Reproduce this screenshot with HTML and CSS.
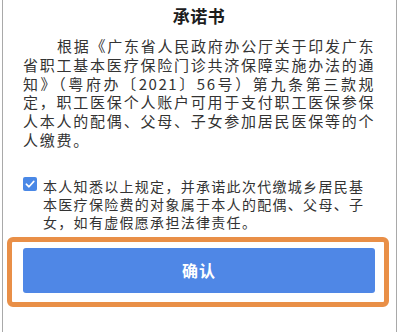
FILE: index.html
```html
<!DOCTYPE html>
<html lang="zh-CN">
<head>
<meta charset="utf-8">
<title>承诺书</title>
<link rel="stylesheet" href="styles.css">
</head>
<body>
<div class="sheet">
  <h1 class="title">承诺书</h1>
  <div class="body">
    <span class="ln first">根据《广东省人民政府办公厅关于印发广东</span>
    <span class="ln">省职工基本医疗保险门诊共济保障实施办法的通</span>
    <span class="ln">知》（粤府办〔2021〕56号）第九条第三款规</span>
    <span class="ln">定，职工医保个人账户可用于支付职工医保参保</span>
    <span class="ln">人本人的配偶、父母、子女参加居民医保等的个</span>
    <span class="ln last">人缴费。</span>
  </div>
  <div class="agree">
    <span class="check">
      <svg viewBox="0 0 14 14" width="14" height="14"><path d="M3.3 7.2 L6 9.8 L10.8 4.4" fill="none" stroke="#fff" stroke-width="1.6" stroke-linecap="round" stroke-linejoin="round"/></svg>
    </span>
    <div class="agree-text">
      <span class="aln">本人知悉以上规定，并承诺此次代缴城乡居民基</span>
      <span class="aln">本医疗保险费的对象属于本人的配偶、父母、子</span>
      <span class="aln">女，如有虚假愿承担法律责任。</span>
    </div>
  </div>
  <div class="highlight">
    <button class="confirm">确认</button>
  </div>
</div>
</body>
</html>
```

FILE: styles.css
```css
html, body {
  margin: 0;
  padding: 0;
  background: #fff;
}
body {
  width: 400px;
  height: 332px;
  overflow: hidden;
  font-family: "Noto Sans CJK SC", "Noto Sans", sans-serif;
}
.sheet {
  margin-left: 2px;
  width: 352px;
  min-height: 332px;
  padding: 6px 21px 0 20px;
  box-sizing: content-box;
  border-left: 1px solid #a9a9a9;
  border-right: 1px solid #a9a9a9;
  display: flex;
  flex-direction: column;
}
.title {
  margin: 0;
  font-size: 17px;
  line-height: 20px;
  font-weight: 700;
  text-align: center;
  color: #1c1c1c;
  letter-spacing: 0.5px;
}
.body {
  margin-top: 11px;
  color: #333;
  font-size: 15px;
  line-height: 18.8px;
}
.ln {
  display: block;
  white-space: nowrap;
  letter-spacing: 1.5px;
  text-align: justify;
  text-align-last: justify;
}
.ln.first {
  padding-left: 34px;
}
.ln.last {
  text-align-last: left;
  letter-spacing: 1.75px;
}
.agree {
  margin-top: 27px;
  display: flex;
  align-items: flex-start;
  gap: 6px;
  color: #333;
  font-size: 14px;
  line-height: 18px;
}
.check {
  flex: none;
  width: 14px;
  height: 14px;
  border-radius: 2px;
  background: #4a88e6;
  display: flex;
}
.agree-text {
  display: flex;
  flex-direction: column;
}
.aln {
  white-space: nowrap;
  letter-spacing: 1.3px;
}
.highlight {
  margin: 6px -14px 0 -16px;
  border: 5px solid #e98f47;
  border-radius: 6px;
  padding: 6px 9px 9px 11px;
}
.confirm {
  display: block;
  width: 100%;
  height: 45px;
  border: none;
  border-radius: 3px;
  background: #4f87e6;
  color: #fff;
  font-family: "Noto Sans CJK SC", sans-serif;
  font-size: 16px;
  font-weight: 700;
  letter-spacing: 1px;
  padding: 0;
}
```
